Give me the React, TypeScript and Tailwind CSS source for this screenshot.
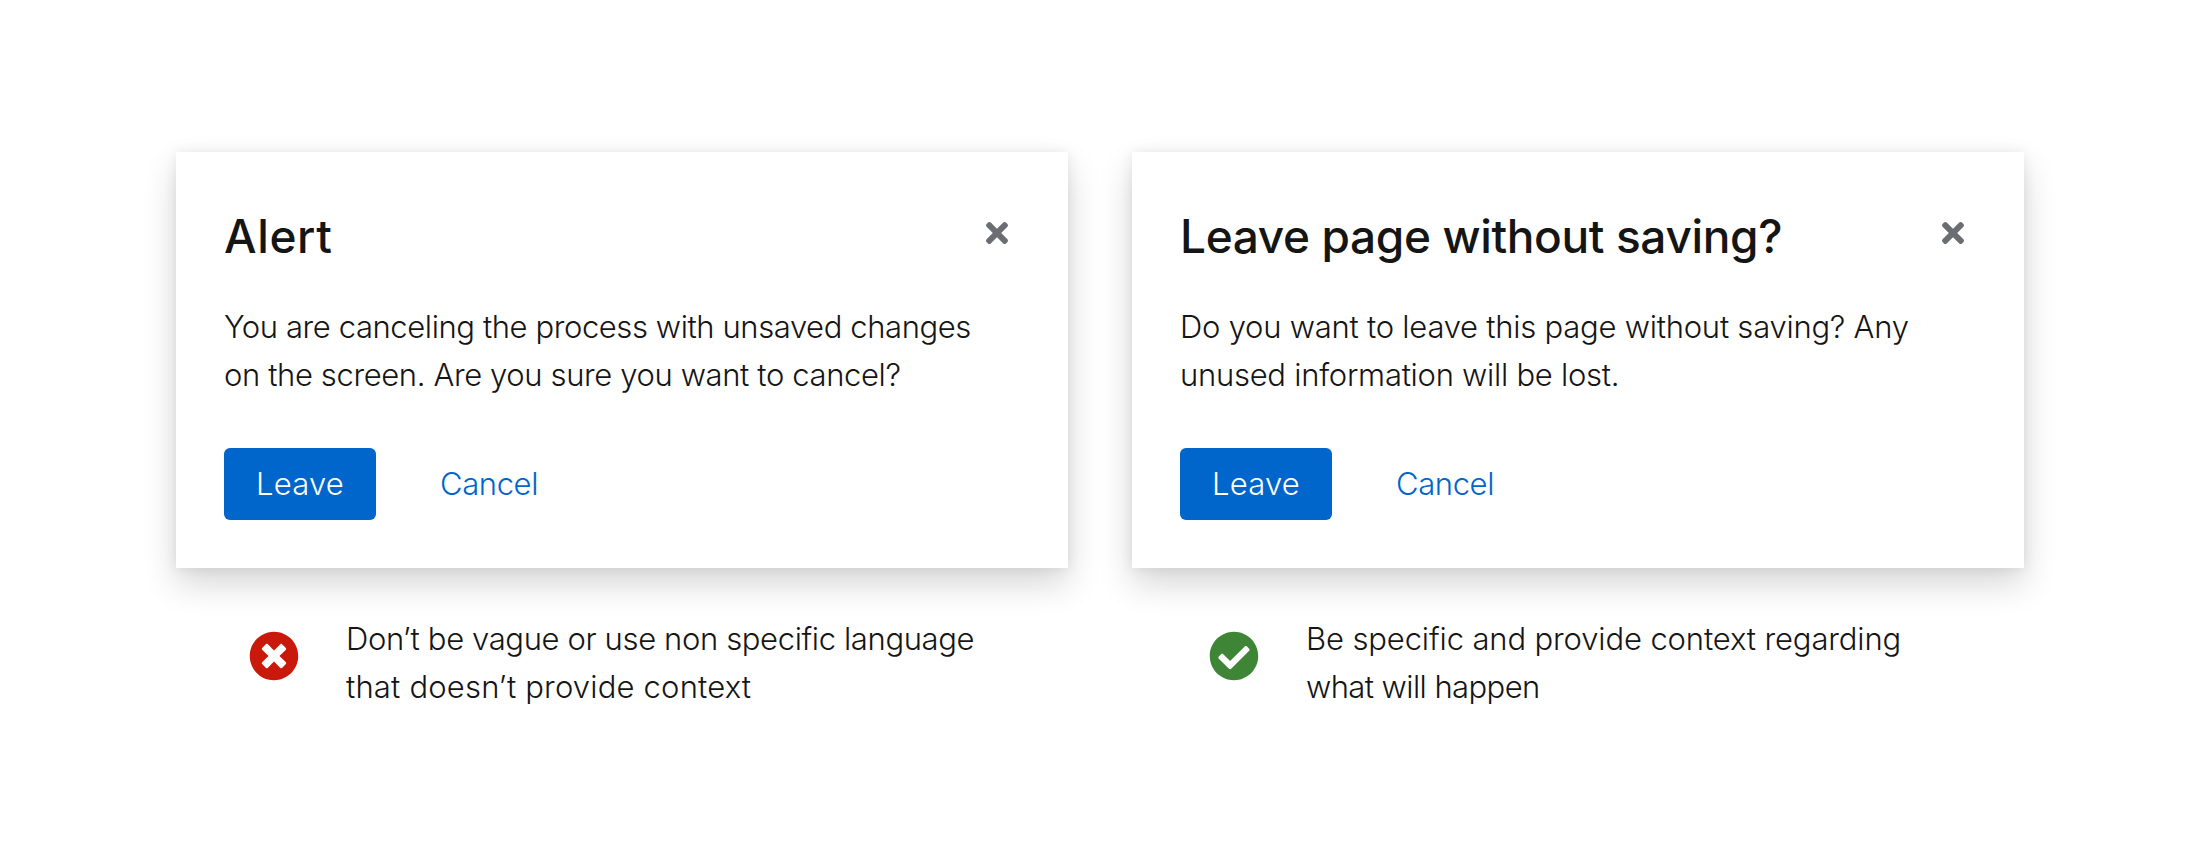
import { FaCheckCircle, FaTimes, FaTimesCircle } from "react-icons/fa";

type Line = { text: string; tracking: string };

function Lines({ lines }: { lines: Line[] }) {
  return (
    <p className="text-[31px] leading-[48px] font-light whitespace-nowrap">
      {lines.map((line) => (
        <span key={line.text} className={`block ${line.tracking}`}>
          {line.text}
        </span>
      ))}
    </p>
  );
}

function Dialog({ title, titleClass, body }: { title: string; titleClass: string; body: Line[] }) {
  return (
    <section className="flex h-[416px] w-[892px] flex-col bg-white px-12 pt-[52px] pb-12 shadow-[0_16px_32px_0_rgba(3,3,3,0.16),0_0_12px_0_rgba(3,3,3,0.08)]">
      <header className="flex items-start justify-between">
        <h2 className={`text-[46px] leading-[64px] font-medium whitespace-nowrap ${titleClass}`}>{title}</h2>
        <button aria-label="Close" className="mt-[13px] mr-3 flex h-8 w-[22px] items-center justify-center text-[#6a6e73]">
          <FaTimes className="h-8 w-[22px]" />
        </button>
      </header>
      <div className="mt-[35px]">
        <Lines lines={body} />
      </div>
      <footer className="mt-auto flex items-center text-[31px] leading-[48px] font-light">
        <button className="h-[72px] w-[152px] rounded-md bg-[#0066cc] pb-px text-center tracking-[0.2px] text-white">Leave</button>
        <button className="ml-16 h-[72px] pb-px tracking-[-0.4px] text-[#0066cc]">Cancel</button>
      </footer>
    </section>
  );
}

export default function App() {
  return (
    <main className="flex h-[864px] w-[2200px] gap-16 bg-white pt-[152px] pl-[176px] font-['Inter',sans-serif] text-[#151515]">
      <div className="flex flex-col">
        <Dialog
          title="Alert"
          titleClass="tracking-[0.6px]"
          body={[
            { text: "You are canceling the process with unsaved changes", tracking: "tracking-[-0.41px]" },
            { text: "on the screen. Are you sure you want to cancel?", tracking: "tracking-[-0.38px]" },
          ]}
        />
        <div className="mt-[47px] flex items-start pl-[74px]">
          <FaTimesCircle className="mt-4 size-[50px] -ml-px text-[#c9190b]" />
          <div className="ml-[47px]">
            <Lines
              lines={[
                { text: "Don’t be vague or use non specific language", tracking: "tracking-[-0.37px]" },
                { text: "that doesn’t provide context", tracking: "tracking-[0.18px]" },
              ]}
            />
          </div>
        </div>
      </div>
      <div className="flex flex-col">
        <Dialog
          title="Leave page without saving?"
          titleClass="tracking-[-0.37px]"
          body={[
            { text: "Do you want to leave this page without saving? Any", tracking: "tracking-[-0.24px]" },
            { text: "unused information will be lost.", tracking: "tracking-[-0.27px]" },
          ]}
        />
        <div className="mt-[47px] flex items-start pl-[78px]">
          <FaCheckCircle className="mt-4 size-[50px] -ml-px text-[#3e8635]" />
          <div className="ml-[47px]">
            <Lines
              lines={[
                { text: "Be specific and provide context regarding", tracking: "tracking-[-0.13px]" },
                { text: "what will happen", tracking: "tracking-[-0.58px]" },
              ]}
            />
          </div>
        </div>
      </div>
    </main>
  );
}
